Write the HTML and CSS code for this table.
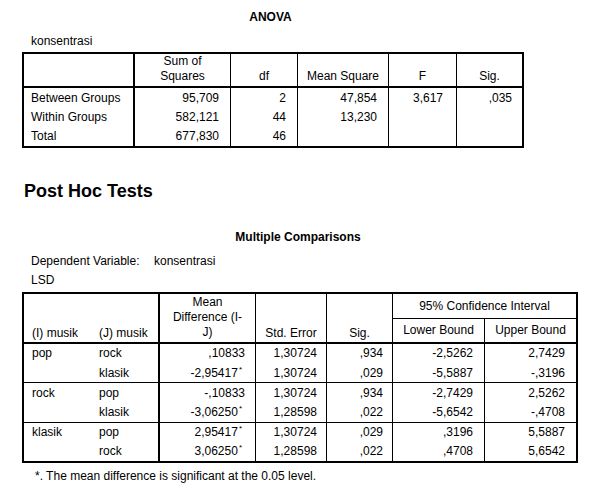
FILE: index.html
```html
<!DOCTYPE html>
<html lang="id">
<head>
<meta charset="utf-8">
<title>ANOVA</title>
<link rel="stylesheet" href="styles.css">
</head>
<body>
<section class="block anova">
  <div class="title">ANOVA</div>
  <div class="caption">konsentrasi</div>
  <table class="tbl tbl-anova">
    <colgroup>
      <col class="c-lab"><col class="c-ss"><col class="c-df"><col class="c-ms"><col class="c-f"><col class="c-sig">
    </colgroup>
    <thead>
      <tr class="hrow">
        <th class="lab thick"></th>
        <th class="vr">Sum of<br>Squares</th>
        <th class="vr">df</th>
        <th class="vr">Mean Square</th>
        <th class="vr">F</th>
        <th>Sig.</th>
      </tr>
    </thead>
    <tbody>
      <tr class="drow">
        <td class="lab thick">Between Groups</td>
        <td class="num vr">95,709</td>
        <td class="num vr">2</td>
        <td class="num vr">47,854</td>
        <td class="num vr f">3,617</td>
        <td class="num sg">,035</td>
      </tr>
      <tr class="drow">
        <td class="lab thick">Within Groups</td>
        <td class="num vr">582,121</td>
        <td class="num vr">44</td>
        <td class="num vr">13,230</td>
        <td class="num vr"></td>
        <td class="num sg"></td>
      </tr>
      <tr class="drow">
        <td class="lab thick">Total</td>
        <td class="num vr">677,830</td>
        <td class="num vr">46</td>
        <td class="num vr"></td>
        <td class="num vr"></td>
        <td class="num sg"></td>
      </tr>
    </tbody>
  </table>
</section>

<h2 class="heading">Post Hoc Tests</h2>

<section class="block multi">
  <div class="title">Multiple Comparisons</div>
  <div class="meta"><span class="meta-k">Dependent Variable:</span><span>konsentrasi</span></div>
  <div class="meta">LSD</div>
  <table class="tbl tbl-mc">
    <colgroup>
      <col class="m-i"><col class="m-j"><col class="m-md"><col class="m-se"><col class="m-sig"><col class="m-lo"><col class="m-up">
    </colgroup>
    <thead>
      <tr class="h1">
        <th rowspan="2" class="lab bot">(I) musik</th>
        <th rowspan="2" class="lab bot thick">(J) musik</th>
        <th rowspan="2" class="vr bot mdh">Mean<br>Difference (I-<br>J)</th>
        <th rowspan="2" class="vr bot">Std. Error</th>
        <th rowspan="2" class="vr bot">Sig.</th>
        <th colspan="2" class="ci">95% Confidence Interval</th>
      </tr>
      <tr class="h2">
        <th class="vr bot2">Lower Bound</th>
        <th class="bot2">Upper Bound</th>
      </tr>
    </thead>
    <tbody>
      <tr class="drow">
        <td class="lab">pop</td><td class="lab thick">rock</td>
        <td class="num vr md">,10833</td><td class="num vr se">1,30724</td><td class="num vr sx">,934</td><td class="num vr">-2,5262</td><td class="num">2,7429</td>
      </tr>
      <tr class="drow">
        <td class="lab"></td><td class="lab thick">klasik</td>
        <td class="num vr md star">-2,95417<sup>*</sup></td><td class="num vr se">1,30724</td><td class="num vr sx">,029</td><td class="num vr">-5,5887</td><td class="num">-,3196</td>
      </tr>
      <tr class="drow grp">
        <td class="lab">rock</td><td class="lab thick">pop</td>
        <td class="num vr md">-,10833</td><td class="num vr se">1,30724</td><td class="num vr sx">,934</td><td class="num vr">-2,7429</td><td class="num">2,5262</td>
      </tr>
      <tr class="drow">
        <td class="lab"></td><td class="lab thick">klasik</td>
        <td class="num vr md star">-3,06250<sup>*</sup></td><td class="num vr se">1,28598</td><td class="num vr sx">,022</td><td class="num vr">-5,6542</td><td class="num">-,4708</td>
      </tr>
      <tr class="drow grp">
        <td class="lab">klasik</td><td class="lab thick">pop</td>
        <td class="num vr md star">2,95417<sup>*</sup></td><td class="num vr se">1,30724</td><td class="num vr sx">,029</td><td class="num vr">,3196</td><td class="num">5,5887</td>
      </tr>
      <tr class="drow">
        <td class="lab"></td><td class="lab thick">rock</td>
        <td class="num vr md star">3,06250<sup>*</sup></td><td class="num vr se">1,28598</td><td class="num vr sx">,022</td><td class="num vr">,4708</td><td class="num">5,6542</td>
      </tr>
    </tbody>
  </table>
  <div class="note">*. The mean difference is significant at the 0.05 level.</div>
</section>
</body>
</html>
```

FILE: styles.css
```css
html, body {
  margin: 0;
  padding: 0;
  background: #ffffff;
}
body {
  color: #000000;
  font-family: "Liberation Sans", Arial, sans-serif;
  font-size: 12px;
  line-height: 16px;
}

.block {
  margin-left: 22px;
}
.anova {
  width: 502px;
  padding-top: 9px;
}
.multi {
  width: 556px;
  margin-top: 28px;
}

.title {
  font-weight: bold;
  text-align: center;
  line-height: 16px;
}
.anova .title {
  padding-right: 5px;
}
.multi .title {
  padding-right: 4px;
}
.caption {
  margin-top: 8px;
  padding-left: 9px;
  line-height: 16px;
}

.heading {
  margin: 33px 0 0 24px;
  font-size: 18px;
  line-height: 20px;
  font-weight: bold;
}

.meta {
  padding-left: 9px;
  line-height: 19px;
  display: flex;
}
.multi .title + .meta {
  margin-top: 7px;
}
.meta-k {
  width: 123px;
}

/* tables */
.tbl {
  border-collapse: separate;
  border-spacing: 0;
  table-layout: fixed;
  border: 2px solid #000;
}
.tbl th,
.tbl td {
  padding: 0;
  font-weight: normal;
  white-space: nowrap;
}
.tbl th {
  text-align: center;
  vertical-align: bottom;
  line-height: 15px;
}
.tbl td {
  line-height: 16px;
  vertical-align: middle;
}

.tbl-anova {
  width: 502px;
  margin-top: 3px;
}
.c-lab { width: 111px; }
.c-ss { width: 96px; }
.c-df { width: 67px; }
.c-ms { width: 91px; }
.c-f { width: 68px; }
.c-sig { width: 65px; }

.tbl-anova .hrow {
  height: 34px;
}
.tbl-anova .hrow th {
  border-bottom: 2px solid #000;
  padding-bottom: 2px;
}
.tbl-anova .drow {
  height: 19.3px;
}

.vr {
  border-right: 1px solid #000;
}
.thick {
  border-right: 2px solid #000;
}
.tbl .lab {
  text-align: left;
  padding-left: 7px;
}
.tbl .num {
  text-align: right;
  padding-right: 11px;
}
.tbl-anova .f {
  padding-right: 13px;
}
.tbl-anova .sg {
  padding-right: 10px;
}

.tbl-mc {
  width: 556px;
  margin-top: 2px;
}
.m-i { width: 67px; }
.m-j { width: 69px; }
.m-md { width: 96px; }
.m-se { width: 71px; }
.m-sig { width: 66px; }
.m-lo { width: 92px; }
.m-up { width: 91px; }

.tbl-mc .h1 {
  height: 25px;
}
.tbl-mc .h2 {
  height: 25px;
}
.tbl-mc .bot {
  border-bottom: 2px solid #000;
  padding-bottom: 1px;
}
.tbl-mc .mdh {
  padding-bottom: 2px;
}
.tbl-mc .bot2 {
  border-bottom: 2px solid #000;
  vertical-align: middle;
}
.tbl-mc .ci {
  border-bottom: 1px solid #000;
  vertical-align: middle;
  padding-top: 2px;
}
.tbl-mc .lab {
  padding-left: 8px;
}
.tbl-mc .drow {
  height: 19.2px;
}
.tbl-mc .grp {
  height: 20.2px;
}
.tbl-mc .grp td {
  border-top: 1px solid #000;
}
.tbl-mc .md {
  padding-right: 10px;
}
.tbl-mc .md.star {
  padding-right: 13px;
}
.tbl-mc .se,
.tbl-mc .sx {
  padding-right: 9px;
}
.star sup {
  font-size: 8px;
  line-height: 0;
  vertical-align: 5px;
  margin-left: 1px;
}

.note {
  margin-top: 5px;
  padding-left: 13px;
  line-height: 16px;
}
```
